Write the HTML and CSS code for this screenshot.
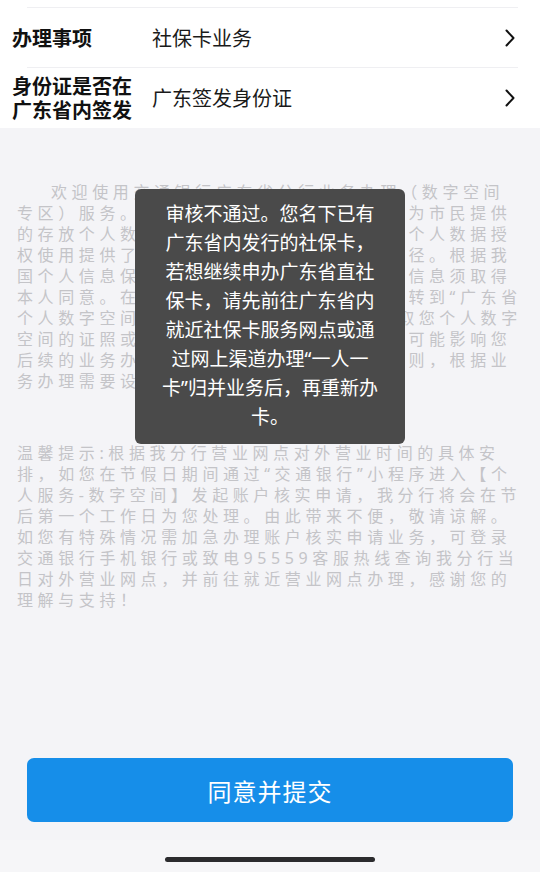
FILE: index.html
```html
<!DOCTYPE html>
<html lang="zh-CN">
<head>
<meta charset="utf-8">
<title>办理事项</title>
<link rel="stylesheet" href="styles.css">
</head>
<body>
<div class="page">
  <div class="card">
    <div class="sep"></div>
    <div class="row">
      <div class="label">办理事项</div>
      <div class="value">社保卡业务</div>
      <svg class="chev" viewBox="0 0 10 18" width="10" height="18"><path d="M1.5 1.5 L8.5 9 L1.5 16.5" fill="none" stroke="#111" stroke-width="2" stroke-linecap="round" stroke-linejoin="round"/></svg>
    </div>
    <div class="sep"></div>
    <div class="row">
      <div class="label">身份证是否在<br>广东省内签发</div>
      <div class="value">广东签发身份证</div>
      <svg class="chev" viewBox="0 0 10 18" width="10" height="18"><path d="M1.5 1.5 L8.5 9 L1.5 16.5" fill="none" stroke="#111" stroke-width="2" stroke-linecap="round" stroke-linejoin="round"/></svg>
    </div>
  </div>

  <div class="content">
    <p class="intro">欢迎使用交通银行广东省分行业务办理（数字空间专区）服务。数字空间是本行依托数字技术为市民提供的存放个人数据的安全空间，同时也为您的个人数据授权使用提供了一条安全便捷、可信合规的途径。根据我国个人信息保护法相关规定，处理您的个人信息须取得本人同意。在您同意本协议后，您的数据将转到“广东省个人数字空间”。若您不同意，我行无法获取您个人数字空间的证照或数据信息为您办理业务，这将可能影响您后续的业务办理。我行遵循合法正当必要原则，根据业务办理需要设置授权有效期。</p>
    <p class="tip">温馨提示:根据我分行营业网点对外营业时间的具体安排，如您在节假日期间通过“交通银行”小程序进入【个人服务-数字空间】发起账户核实申请，我分行将会在节后第一个工作日为您处理。由此带来不便，敬请谅解。如您有特殊情况需加急办理账户核实申请业务，可登录交通银行手机银行或致电95559客服热线查询我分行当日对外营业网点，并前往就近营业网点办理，感谢您的理解与支持！</p>
  </div>

  <div class="actions">
    <button class="submit" type="button">同意并提交</button>
  </div>
  <div class="home"><span class="home-bar"></span></div>

  <div class="toast">审核不通过。您名下已有广东省内发行的社保卡，若想继续申办广东省直社保卡，请先前往广东省内就近社保卡服务网点或通过网上渠道办理“一人一卡”归并业务后，再重新办卡。</div>
</div>
</body>
</html>
```

FILE: styles.css
```css
html, body {
  margin: 0;
  padding: 0;
}
body {
  background: #f4f4f7;
  font-family: "Noto Sans CJK SC", "Noto Sans", sans-serif;
}
.page {
  position: relative;
  width: 540px;
  height: 872px;
  display: flex;
  flex-direction: column;
  overflow: hidden;
}
.card {
  background: #ffffff;
  padding-top: 7px;
}
.sep {
  height: 1px;
  background: #efeff2;
  margin: 0 22px 0 27px;
}
.row {
  display: flex;
  align-items: center;
  height: 59px;
}
.row + .sep + .row {
  height: 60px;
}
.label {
  width: 140px;
  padding-left: 12px;
  font-size: 20px;
  font-weight: 700;
  line-height: 24px;
  color: #111111;
}
.value {
  flex: 1;
  font-size: 20px;
  line-height: 24px;
  color: #1a1a1a;
}
.chev {
  margin-right: 25px;
  flex: none;
}
.content {
  flex: 1;
  padding: 54px 17px 0 17px;
  font-family: "Noto Sans", "Noto Sans CJK SC", sans-serif;
  font-size: 16px;
  line-height: 21px;
  letter-spacing: 4.6px;
  color: #c4c4c8;
}
.content p {
  margin: 0;
}
.intro {
  text-indent: 34px;
}
.tip {
  margin-top: 51px !important;
}
.actions {
  padding: 0 27px 18px 27px;
}
.submit {
  display: block;
  width: 100%;
  height: 64px;
  border: none;
  border-radius: 7px;
  background: #168ee9;
  color: #ffffff;
  font-family: "Noto Sans CJK SC", sans-serif;
  font-size: 24px;
  letter-spacing: 1px;
}
.home {
  height: 32px;
  display: flex;
  justify-content: center;
  align-items: flex-start;
  background: #f6f6f8;
}
.home-bar {
  margin-top: 17px;
  width: 210px;
  height: 5px;
  border-radius: 3px;
  background: #2c2c2e;
}
.toast {
  position: absolute;
  left: 135px;
  top: 189px;
  width: 270px;
  box-sizing: border-box;
  padding: 11px 25px 12px 25px;
  background: #4a4a4a;
  border-radius: 6px;
  color: #ffffff;
  font-family: "Noto Sans", "Noto Sans CJK SC", sans-serif;
  font-size: 19px;
  line-height: 29px;
  text-align: center;
}
```
